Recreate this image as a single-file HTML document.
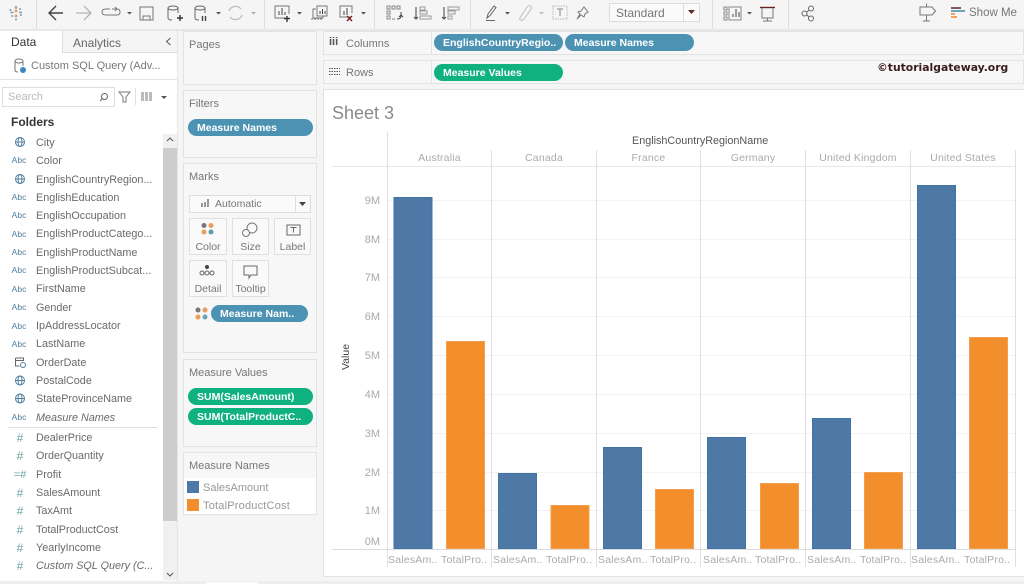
<!DOCTYPE html>
<html><head><meta charset="utf-8">
<style>
html,body{margin:0;padding:0;background:#f5f5f5}
#p{position:relative;width:1024px;height:584px;overflow:hidden;background:#f5f5f5;font-family:"Liberation Sans",sans-serif;font-size:11px;color:#666}
#p div{position:absolute;box-sizing:border-box;white-space:nowrap}
.card{background:#f7f7f7;border:1px solid #e2e2e2}
.t{font-size:11px;color:#777}
.pill{height:17px;line-height:18px;border-radius:9px;color:#fff;font-weight:bold;font-size:10.5px;padding-left:9px}
.b{background:#4c92b3}
.g{background:#0fb27e}
.f{left:36px;color:#6a6a6a;font-size:10.8px;line-height:14px;height:14px;margin-top:1px}
.i{left:10px;width:18px;text-align:center;color:#4f7f9f;font-size:8.5px;line-height:14px;height:14px}
.h{left:13px;width:14px;text-align:center;color:#6aa5a5;font-size:12px;line-height:14px;height:14px;margin-top:1px}
.mk{background:#f9f9f9;border:1px solid #e0e0e0;width:38px;height:37px;text-align:center;color:#777;font-size:10.5px;padding-top:22px;line-height:13px}
.ax{color:#aaa;font-size:11px;text-align:right;width:30px;left:350px;line-height:14px;height:14px}
.c{color:#aaa;font-size:10.5px;text-align:center;top:152px;line-height:13px;letter-spacing:.2px}
.x{color:#aaa;font-size:10.5px;top:554px;line-height:13px;letter-spacing:.2px}
</style></head><body><div id="p">

<!-- toolbar -->
<svg style="position:absolute;left:0;top:0" width="1024" height="31" fill="none" stroke="#666" stroke-width="1">
<g stroke="#ddd"><path d="M36.500 0V29M264.500 0V29M374.500 0V29M470.500 0V29M712.500 0V29M788.500 0V29"/></g>
<g stroke-width="1.600"><circle cx="16" cy="7.500" r=".6" stroke="#8aa5b5"/><path d="M16 9.500v2.800M14.600 10.900h2.800M16 14.500v2.800M14.400 16h3.200" stroke="#e89a5b"/><path d="M10.500 12.500h3M19 12.500h3M10.500 9v2M21 14v2M11 16h2M19 9h2" stroke="#7f9fb5"/><path d="M16 18.500v2" stroke="#7f9fb5"/></g>
<path d="M63 13H49M56 6l-7 7 7 7" stroke="#444" stroke-width="1.400"/>
<path d="M76 13h14M84 6l7 7-7 7" stroke="#b5b5b5" stroke-width="1.300"/>
<path d="M112 9h5M117 9l-2-2M117 9l-2 2M110 9h-4q-4 0-4 3t4 3h11q3 0 3-3t-3-3" stroke="#777"/>
<path d="M127 12l2.500 2.500 2.500-2.500z" fill="#555" stroke="none"/>
<path d="M140 7h13v13h-13zM143 20v-4h7v4" stroke="#777"/>
<ellipse cx="173" cy="8" rx="5" ry="2" /><path d="M168 8v10q0 2 4 2M178 8v5"/><path d="M177 18h6M180 15v6" stroke="#333" stroke-width="1.400"/>
<ellipse cx="200" cy="8" rx="5" ry="2"/><path d="M195 8v10q0 2 4 2M205 8v5"/><path d="M202.500 16v5M205.500 16v5" stroke="#444" stroke-width="1.400"/>
<path d="M216 12l2.500 2.500 2.500-2.500z" fill="#555" stroke="none"/>
<path d="M229 11a7 7 0 0 1 12-2M242 15a7 7 0 0 1-12 2" stroke="#bbb" stroke-width="1.200"/>
<path d="M251 12l2.500 2.500 2.500-2.500z" fill="#aaa" stroke="none"/>
<path d="M285 18h-10V6h14v8" stroke="#777"/><path d="M279 15v-4M282 15V8M285 15v-3" stroke="#444"/><path d="M284 18.500h6M287 16v6" stroke="#333" stroke-width="1.400"/>
<path d="M297 12l2.500 2.500 2.500-2.500z" fill="#555" stroke="none"/>
<path d="M316 9h-3v9h10v-2M317 6h10v10h-10z" stroke="#777"/><path d="M320 14v-3M322.500 14V9M325 14v-3" stroke="#444"/><path d="M311 19h11" stroke="#777" stroke-dasharray="2 1"/>
<path d="M351 17h-11V6h12v7" stroke="#777"/><path d="M344 15v-4M347 15V8" stroke="#444"/><path d="M347 16l5 5M352 16l-5 5" stroke="#7a2020" stroke-width="1.400"/>
<path d="M361 12l2.500 2.500 2.500-2.500z" fill="#555" stroke="none"/>
<g stroke="#888"><path d="M387 6h3v3h-3zM392 6h3v3h-3zM397 6h3v3h-3zM387 11h3v3h-3zM387 16h3v3h-3zM392 19h3"/><path d="M401 12v4q0 3-4 3M399 17l2-2 2 2" stroke="#444"/></g>
<path d="M416 7v12M414 17l2 2 2-2" stroke="#444"/><path d="M420 7h5v3h-5zM420 11h7v3h-7zM420 16h11v3h-11z" stroke="#999"/>
<path d="M444 7v12M442 17l2 2 2-2" stroke="#444"/><path d="M448 7h11v3h-11zM448 11h7v3h-7zM448 16h4v3h-4z" stroke="#999"/>
<path d="M487 18l1-4 6-8 2 1.500-6 8zM486 20.500h9" stroke="#666"/>
<path d="M505 12l2.500 2.500 2.500-2.500z" fill="#555" stroke="none"/>
<path d="M520 18l7-11q2-2 3.500-1t.5 3l-7 10q-2 2-3.500 1t-.5-2z" stroke="#c0c0c0"/>
<path d="M539 12l2.500 2.500 2.500-2.500z" fill="#bbb" stroke="none"/>
<path d="M553 6h14v13h-14z" stroke="#bbb" stroke-dasharray="1.500 1"/><path d="M557 9h6M560 9v7" stroke="#888"/>
<path d="M584 7l4 5-3 2-1 3-3-2-4 4 3-5-2-2 3-1z" stroke="#777"/>
<path d="M724 7h3v3h-3zM724 12h3v3h-3zM724 17h3v3h-3zM729 7h12v13h-12z" stroke="#888"/><path d="M733 17v-3M736 17V9M739 17v-5" stroke="#444"/>
<path d="M747 12l2.500 2.500 2.500-2.500z" fill="#555" stroke="none"/>
<path d="M760 7.500h15" stroke="#6a2020" stroke-width="1.400"/><path d="M762 8v10h11V8M767.500 18v3M763 21h9" stroke="#777"/>
<circle cx="811" cy="8.500" r="2.500"/><circle cx="804.500" cy="13.500" r="2.500"/><circle cx="811" cy="18.500" r="2.500"/><path d="M806.700 12l2.600-2M806.700 15l2.600 2"/>
<path d="M920 7h12l3.500 4-3.500 4h-12zM926.500 3.500V7M926.500 15v6M923 21h7" stroke="#777"/>
<g stroke="none"><rect x="951" y="7" width="10" height="2" fill="#7a5a6a"/><rect x="951" y="10" width="14" height="2" fill="#6fa5b8"/><rect x="951" y="13" width="4" height="2" fill="#f0a060"/><rect x="951" y="16" width="6" height="2" fill="#f0a060"/></g>
</svg>
<div style="left:969px;top:6px;font-size:11.500px;color:#777;line-height:14px">Show Me</div>
<div style="left:609px;top:3px;width:91px;height:19px;background:#fafafa;border:1px solid #ddd"></div>
<div style="left:616px;top:6px;font-size:12px;color:#777;line-height:15px">Standard</div>
<div style="left:683px;top:3px;width:1px;height:19px;background:#ddd"></div>
<svg style="position:absolute;left:688px;top:10px" width="8" height="5"><path d="M0 0h7L3.500 4z" fill="#5a2a2a"/></svg>
<div style="left:0;top:29px;width:1024px;height:2px;background:#e8e8e8"></div>

<!-- left panel -->
<div style="left:0;top:31px;width:177px;height:553px;background:#fff"></div>
<div style="left:62px;top:31px;width:115px;height:22px;background:#f5f5f5;border-left:1px solid #ddd;border-bottom:1px solid #ddd"></div>
<div style="left:177px;top:31px;width:1px;height:553px;background:#e5e5e5"></div>
<div style="left:11px;top:35px;font-size:12px;color:#333;line-height:14px">Data</div>
<div style="left:73px;top:36px;font-size:12px;color:#666;line-height:14px">Analytics</div>
<svg style="position:absolute;left:165px;top:37px" width="8" height="10" fill="none" stroke="#555"><path d="M5.500 1L1.500 4.500l4 3.500"/></svg>
<svg style="position:absolute;left:13px;top:58px" width="15" height="16" fill="none" stroke="#777"><ellipse cx="6" cy="3" rx="4" ry="2"/><path d="M2 3v9q0 2 3 2M10 3v5"/><circle cx="10" cy="12" r="3" fill="#3d86c0" stroke="none"/></svg>
<div style="left:31px;top:59px;color:#777;font-size:11px;line-height:14px">Custom SQL Query (Adv...</div>
<div style="left:0;top:79px;width:177px;height:1px;background:#e5e5e5"></div>
<div style="left:2px;top:87px;width:113px;height:20px;border:1px solid #ddd;background:#fff"></div>
<div style="left:8px;top:91px;color:#bbb;font-size:11px;line-height:13px">Search</div>
<svg style="position:absolute;left:99px;top:92px" width="10" height="10" fill="none" stroke="#666"><circle cx="5.500" cy="4.500" r="3"/><path d="M3.500 6.500L1 9"/></svg>
<svg style="position:absolute;left:118px;top:90px" width="14" height="14" fill="none" stroke="#777"><path d="M1 2h11L8 7v5H5V7z"/></svg>
<div style="left:135px;top:88px;width:1px;height:17px;background:#e0e0e0"></div>
<svg style="position:absolute;left:141px;top:91px" width="26" height="12"><path d="M0 1h11v9H0z" fill="#bbb"/><path d="M3.500 1v9M7.500 1v9" stroke="#fff"/><path d="M20 5h6l-3 3z" fill="#555"/></svg>
<div style="left:11px;top:115px;font-size:12px;font-weight:bold;color:#333;line-height:14px">Folders</div>

<div style="left:163px;top:134px;width:14px;height:446px;background:#f0f0f0"></div>
<div style="left:163px;top:148px;width:14px;height:373px;background:#cdcdcd"></div>
<svg style="position:absolute;left:166px;top:137px" width="8" height="6" fill="none" stroke="#555"><path d="M1 4l3-3 3 3"/></svg>
<svg style="position:absolute;left:166px;top:572px" width="8" height="6" fill="none" stroke="#555"><path d="M1 1l3 3 3-3"/></svg>

<svg style="position:absolute;left:0;top:130px" width="40" height="454" fill="none" stroke="#4f7f9f" stroke-width="1">
<g><circle cx="20" cy="12" r="4.500"/><ellipse cx="20" cy="12" rx="2" ry="4.500"/><path d="M15.500 12h9"/></g>
<circle cx="20" cy="49" r="4.500"/><ellipse cx="20" cy="49" rx="2" ry="4.500"/><path d="M15.500 49h9"/>
<circle cx="20" cy="250.500" r="4.500"/><ellipse cx="20" cy="250.500" rx="2" ry="4.500"/><path d="M15.500 250.500h9"/>
<circle cx="20" cy="268.500" r="4.500"/><ellipse cx="20" cy="268.500" rx="2" ry="4.500"/><path d="M15.500 268.500h9"/>
<path d="M15.500 228h8v3M15.500 228v8h4M15.500 230.500h8" stroke="#666"/><circle cx="23" cy="235" r="2.500" stroke="#4f7f9f"/>
</svg>
<div class="f" style="top:135px">City</div>
<div class="i" style="top:153px">Abc</div><div class="f" style="top:153px">Color</div>
<div class="f" style="top:172px">EnglishCountryRegion...</div>
<div class="i" style="top:190px">Abc</div><div class="f" style="top:190px">EnglishEducation</div>
<div class="i" style="top:208px">Abc</div><div class="f" style="top:208px">EnglishOccupation</div>
<div class="i" style="top:227px">Abc</div><div class="f" style="top:226px">EnglishProductCatego...</div>
<div class="i" style="top:245px">Abc</div><div class="f" style="top:245px">EnglishProductName</div>
<div class="i" style="top:263px">Abc</div><div class="f" style="top:263px">EnglishProductSubcat...</div>
<div class="i" style="top:282px">Abc</div><div class="f" style="top:281px">FirstName</div>
<div class="i" style="top:300px">Abc</div><div class="f" style="top:300px">Gender</div>
<div class="i" style="top:319px">Abc</div><div class="f" style="top:318px">IpAddressLocator</div>
<div class="i" style="top:337px">Abc</div><div class="f" style="top:336px">LastName</div>
<div class="f" style="top:355px">OrderDate</div>
<div class="f" style="top:373px">PostalCode</div>
<div class="f" style="top:391px">StateProvinceName</div>
<div class="i" style="top:410px">Abc</div><div class="f" style="top:410px;font-style:italic">Measure Names</div>
<div style="left:8px;top:427px;width:149px;height:1px;background:#ddd"></div>
<div class="h" style="top:430px">#</div><div class="f" style="top:430px">DealerPrice</div>
<div class="h" style="top:448px">#</div><div class="f" style="top:448px">OrderQuantity</div>
<div class="h" style="top:467px;font-size:11px">=#</div><div class="f" style="top:467px">Profit</div>
<div class="h" style="top:485px">#</div><div class="f" style="top:485px">SalesAmount</div>
<div class="h" style="top:503px">#</div><div class="f" style="top:503px">TaxAmt</div>
<div class="h" style="top:522px">#</div><div class="f" style="top:522px">TotalProductCost</div>
<div class="h" style="top:540px">#</div><div class="f" style="top:540px">YearlyIncome</div>
<div class="h" style="top:558px">#</div><div class="f" style="top:558px;font-style:italic">Custom SQL Query (C...</div>
<div style="left:0;top:581px;width:1024px;height:3px;background:#eee"></div>
<div style="left:207px;top:582px;width:50px;height:2px;background:#fff"></div>

<!-- shelves column -->
<div class="card" style="left:183px;top:31px;width:134px;height:54px"></div>
<div class="t" style="left:189px;top:38px;line-height:14px">Pages</div>
<div class="card" style="left:183px;top:90px;width:134px;height:68px"></div>
<div class="t" style="left:189px;top:97px;line-height:14px">Filters</div>
<div class="pill b" style="left:188px;top:119px;width:125px">Measure Names</div>

<div class="card" style="left:183px;top:163px;width:134px;height:190px"></div>
<div class="t" style="left:189px;top:170px;line-height:14px">Marks</div>
<div style="left:189px;top:195px;width:122px;height:18px;background:#fafafa;border:1px solid #ddd"></div>
<div style="left:295px;top:195px;width:1px;height:18px;background:#ddd"></div>
<div style="left:215px;top:197px;font-size:10.5px;color:#777;line-height:14px">Automatic</div>
<svg style="position:absolute;left:200px;top:199px" width="10" height="9" fill="#999"><rect x="1" y="4" width="2" height="4"/><rect x="4" y="3" width="2" height="5"/><rect x="7" y="0" width="2" height="8"/></svg>
<svg style="position:absolute;left:299px;top:202px" width="8" height="4"><path d="M0 0h7L3.500 4z" fill="#444"/></svg>

<div class="mk" style="left:189px;top:218px">Color</div>
<div class="mk" style="left:232px;top:218px;width:37px">Size</div>
<div class="mk" style="left:274px;top:218px;width:37px">Label</div>
<div class="mk" style="left:189px;top:260px">Detail</div>
<div class="mk" style="left:232px;top:260px;width:37px">Tooltip</div>
<svg style="position:absolute;left:196px;top:222px" width="112" height="80" fill="none">
<circle cx="8" cy="3.500" r="2.500" fill="#777"/><circle cx="15" cy="3.500" r="2.500" fill="#ee9c5a"/><circle cx="8" cy="10" r="2.500" fill="#ee9c5a"/><circle cx="15" cy="10" r="2.500" fill="#5f9aad"/>
<circle cx="56" cy="6" r="5" stroke="#777"/><circle cx="50" cy="11" r="3.500" stroke="#777" fill="#f9f9f9"/>
<path d="M91 3h13v10h-13z" stroke="#666"/><path d="M94.500 5.500h6M97.500 5.500v5" stroke="#666"/>
<circle cx="11" cy="45" r="2" fill="#444"/><circle cx="6" cy="51" r="2" stroke="#666"/><circle cx="11" cy="51" r="2" stroke="#666"/><circle cx="16" cy="51" r="2" stroke="#666"/>
<path d="M48 44h13v9h-6l-2 3v-3h-5z" stroke="#666"/>
</svg>
<svg style="position:absolute;left:195px;top:307px" width="14" height="14"><circle cx="3" cy="3" r="2.500" fill="#777"/><circle cx="10" cy="3" r="2.500" fill="#ee9c5a"/><circle cx="3" cy="10" r="2.500" fill="#ee9c5a"/><circle cx="10" cy="10" r="2.500" fill="#6aa5b5"/></svg>
<div class="pill b" style="left:211px;top:305px;width:97px">Measure Nam..</div>

<div class="card" style="left:183px;top:359px;width:134px;height:88px"></div>
<div class="t" style="left:189px;top:366px;line-height:14px">Measure Values</div>
<div class="pill g" style="left:188px;top:388px;width:125px">SUM(SalesAmount)</div>
<div class="pill g" style="left:188px;top:408px;width:125px">SUM(TotalProductC..</div>

<div class="card" style="left:183px;top:452px;width:134px;height:63px"></div>
<div style="left:184px;top:478px;width:132px;height:36px;background:#fff"></div>
<div class="t" style="left:189px;top:459px;line-height:14px">Measure Names</div>
<div style="left:187px;top:481px;width:12px;height:12px;background:#4e79a7"></div>
<div style="left:187px;top:499px;width:12px;height:12px;background:#f28e2b"></div>
<div style="left:203px;top:481px;color:#999;font-size:11px;line-height:14px">SalesAmount</div>
<div style="left:203px;top:499px;color:#999;font-size:11px;line-height:14px;letter-spacing:.2px">TotalProductCost</div>

<!-- top shelves -->
<div class="card" style="left:323px;top:31px;width:701px;height:24px"></div>
<div style="left:431px;top:31px;width:1px;height:24px;background:#e2e2e2"></div>
<div style="left:329px;top:36px;font-weight:bold;color:#555;font-size:11px;line-height:13px">iii</div>
<div style="left:346px;top:37px;color:#777;font-size:11px;line-height:14px">Columns</div>
<div class="pill b" style="left:434px;top:34px;width:129px">EnglishCountryRegio..</div>
<div class="pill b" style="left:565px;top:34px;width:129px">Measure Names</div>
<div class="card" style="left:323px;top:60px;width:701px;height:24px"></div>
<div style="left:431px;top:60px;width:1px;height:24px;background:#e2e2e2"></div>
<svg style="position:absolute;left:329px;top:67px" width="12" height="10" stroke="#555"><path d="M0 1.500h11M0 4.500h11M0 7.500h11" stroke-dasharray="1.500 1"/></svg>
<div style="left:346px;top:66px;color:#777;font-size:11px;line-height:14px">Rows</div>
<div class="pill g" style="left:434px;top:64px;width:129px">Measure Values</div>
<div style="left:877px;top:60px;font-family:'DejaVu Sans',sans-serif;font-weight:bold;font-size:10.800px;color:#3a1c1c;line-height:16px">©tutorialgateway.org</div>

<!-- sheet -->
<div style="left:323px;top:89px;width:701px;height:488px;background:#fff;border:1px solid #e2e2e2;border-right:0"></div>
<div style="left:332px;top:103px;font-size:18px;color:#8a8a8a;line-height:21px">Sheet 3</div>
<div style="left:632px;top:135px;color:#555;font-size:10.8px;line-height:13px">EnglishCountryRegionName</div>

<svg style="position:absolute;left:0;top:0" width="1024" height="584">
<g stroke="#f3f3f3"><path d="M388 200.500H1015M388 239.500H1015M388 277.500H1015M388 316.500H1015M388 355.500H1015M388 394.500H1015M388 433.500H1015M388 472.500H1015M388 510.500H1015"/></g>
<path d="M332 166.500H1015" stroke="#e8e8e8"/>
<path d="M332 549.500H1015" stroke="#dcdcdc"/>
<g stroke="#e0e0e0"><path d="M387.500 132V567M491.500 150V567M596.500 150V567M700.500 150V567M805.500 150V567M910.500 150V567M1015.500 150V567"/></g>
<g fill="#4e79a7" stroke="#3f74a6">
<rect x="394" y="197.500" width="38" height="351"/><rect x="498.500" y="473.500" width="38" height="75"/><rect x="603.500" y="447.500" width="38" height="101"/><rect x="707.500" y="437.500" width="38" height="111"/><rect x="812.500" y="418.500" width="38" height="130"/><rect x="917.500" y="185.500" width="38" height="363"/>
</g>
<g fill="#f28e2b" stroke="#f4a050">
<rect x="446.500" y="341.500" width="38" height="207"/><rect x="551" y="505.500" width="38" height="43"/><rect x="655.500" y="489.500" width="38" height="59"/><rect x="760.500" y="483.500" width="38" height="65"/><rect x="864.500" y="472.500" width="38" height="76"/><rect x="969.500" y="337.500" width="38" height="211"/>
</g>
</svg>

<div class="ax" style="top:194px">9M</div>
<div class="ax" style="top:233px">8M</div>
<div class="ax" style="top:271px">7M</div>
<div class="ax" style="top:310px">6M</div>
<div class="ax" style="top:349px">5M</div>
<div class="ax" style="top:388px">4M</div>
<div class="ax" style="top:427px">3M</div>
<div class="ax" style="top:466px">2M</div>
<div class="ax" style="top:504px">1M</div>
<div class="ax" style="top:535px">0M</div>
<div style="left:326px;top:350px;width:40px;text-align:center;transform:rotate(-90deg);color:#444;font-size:10.5px;line-height:14px">Value</div>

<div class="c" style="left:388px;width:103px">Australia</div>
<div class="c" style="left:492px;width:104px">Canada</div>
<div class="c" style="left:597px;width:103px">France</div>
<div class="c" style="left:701px;width:104px">Germany</div>
<div class="c" style="left:806px;width:104px">United Kingdom</div>
<div class="c" style="left:911px;width:104px">United States</div>

<div class="x" style="left:388px">SalesAm..</div><div class="x" style="left:441px">TotalPro..</div>
<div class="x" style="left:493px">SalesAm..</div><div class="x" style="left:546px">TotalPro..</div>
<div class="x" style="left:598px">SalesAm..</div><div class="x" style="left:650px">TotalPro..</div>
<div class="x" style="left:703px">SalesAm..</div><div class="x" style="left:755px">TotalPro..</div>
<div class="x" style="left:807px">SalesAm..</div><div class="x" style="left:860px">TotalPro..</div>
<div class="x" style="left:911px">SalesAm..</div><div class="x" style="left:964px">TotalPro..</div>

</div></body></html>
